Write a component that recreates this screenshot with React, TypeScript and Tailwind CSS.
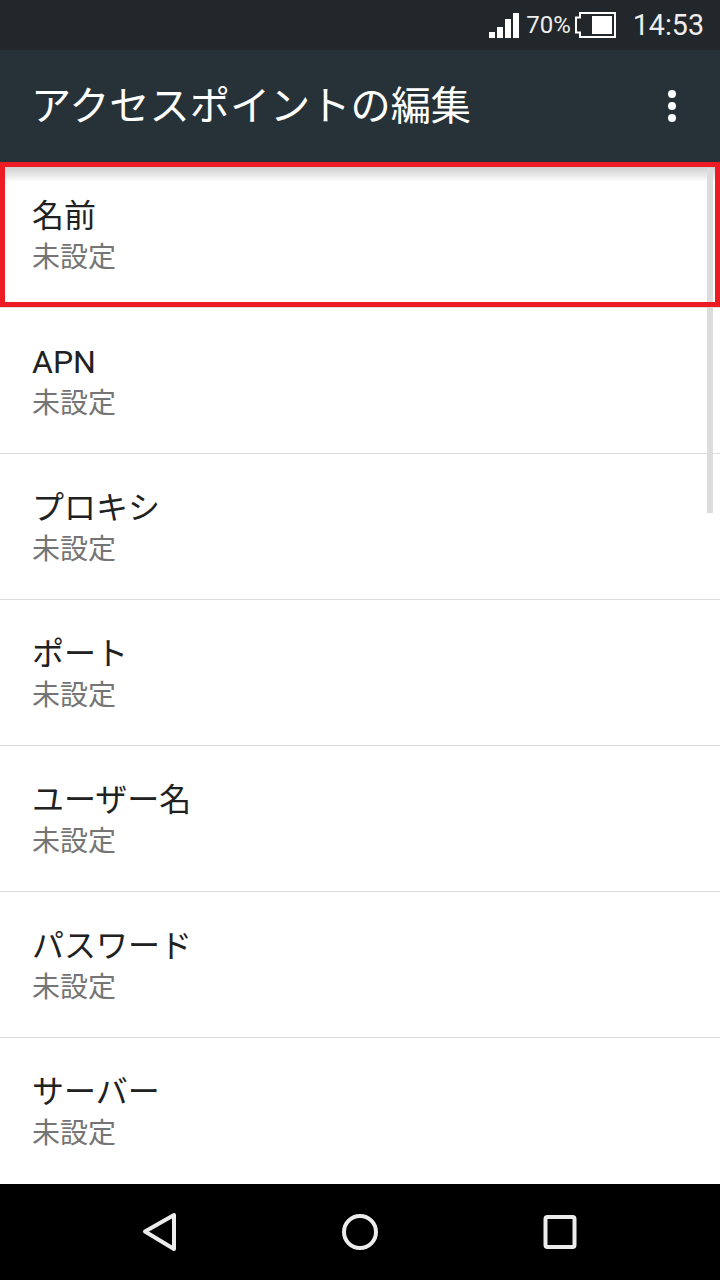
const cjk = "font-['Roboto','Noto_Sans_CJK_JP',sans-serif]";

const items = ["名前", "APN", "プロキシ", "ポート", "ユーザー名", "パスワード", "サーバー"];

function Row({ title, last }: { title: string; last: boolean }) {
  return (
    <div className={`h-[146px] shrink-0 pl-8 pt-[32px] ${last ? "" : "border-b border-[#dcdcdc]"}`}>
      <div className="text-[32px] leading-[45px] text-[#212121]">{title}</div>
      <div className="text-[28px] leading-[38px] text-[#757575]">未設定</div>
    </div>
  );
}

export default function App() {
  return (
    <div className={`relative flex h-[1280px] w-[720px] flex-col overflow-hidden bg-white ${cjk}`}>
      <div className="flex h-[50px] shrink-0 items-center justify-end bg-[#21272b] pr-4 text-white">
        <svg width="30" height="25" viewBox="0 0 30 25" fill="#fff" className="mr-[7px] mt-[1px]">
          <rect x="0" y="19" width="6" height="6" />
          <rect x="8" y="14" width="6" height="11" />
          <rect x="16" y="6" width="6" height="19" />
          <rect x="24" y="0" width="6" height="25" />
        </svg>
        <span className="text-[24px] leading-[50px] text-[#eeeeee]">70%</span>
        <svg width="41" height="26" viewBox="0 0 41 26" className="ml-[4px]">
          <path d="M5 1h35v24h-35v-4.5h-4v-15h4z" fill="none" stroke="#fff" strokeWidth="2" />
          <rect x="17" y="4" width="20" height="18" fill="#fff" />
        </svg>
        <span className="ml-[17px] text-[28.6px] leading-[50px] text-[#eeeeee]">14:53</span>
      </div>

      <div className="flex h-[112px] shrink-0 items-center justify-between bg-[#263238] pl-[31px] pr-[44px] text-white">
        <span className="pt-[2px] text-[40.2px] leading-[110px]">アクセスポイントの編集</span>
        <div className="flex flex-col gap-[4px]">
          <span className="h-2 w-2 rounded-full bg-white" />
          <span className="h-2 w-2 rounded-full bg-white" />
          <span className="h-2 w-2 rounded-full bg-white" />
        </div>
      </div>

      <div className="flex flex-1 flex-col overflow-hidden">
        {items.map((t, i) => (
          <Row key={t} title={t} last={i === items.length - 1} />
        ))}
      </div>

      <div className="flex h-[96px] shrink-0 items-center justify-around bg-black">
        <svg width="480" height="96" viewBox="0 0 480 96" fill="none" stroke="#ececec" strokeWidth="4" strokeLinejoin="round">
          <path d="M54 16v34L25 32.5z" transform="translate(0 15)" />
          <circle cx="240" cy="48" r="16" />
          <rect x="425.5" y="33" width="29" height="30" rx="2" />
        </svg>
      </div>

      <div className="pointer-events-none absolute left-0 top-[162px] h-[20px] w-full bg-gradient-to-b from-[#00000040] to-transparent" />
      <div className="pointer-events-none absolute left-[707px] top-[168px] h-[345px] w-[6px] bg-[#dcdcdc]" />
      <div className="pointer-events-none absolute left-0 top-[162px] h-[145px] w-[720px] border-[5px] border-[#ed1c24]" />
    </div>
  );
}
